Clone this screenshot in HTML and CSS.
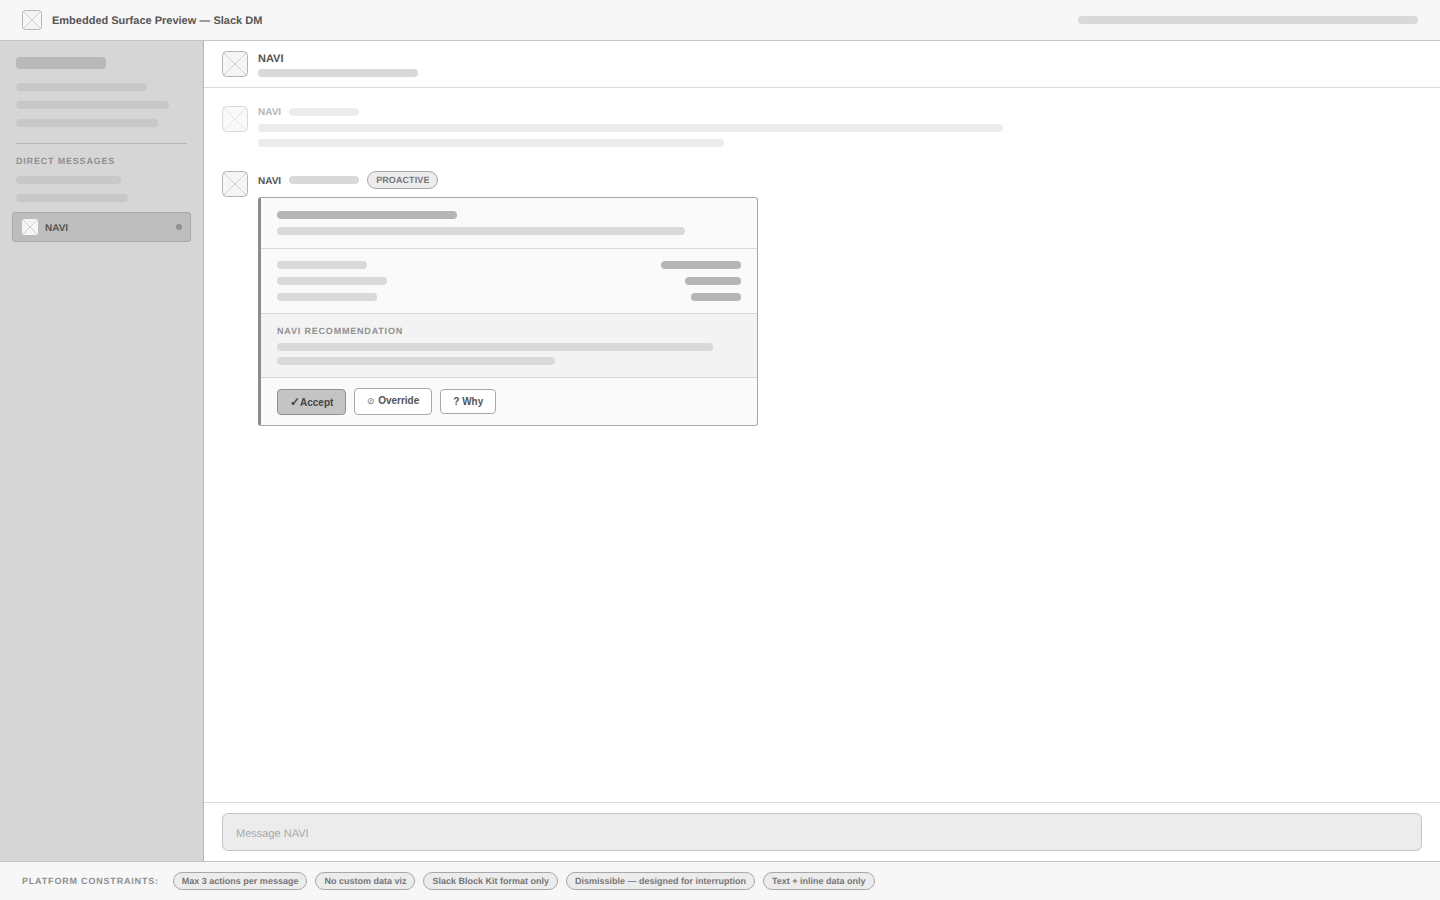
FILE: index.html
```html
<!DOCTYPE html>
<html lang="en">
<head>
<meta charset="utf-8">
<title>Embedded Surface Preview — Slack DM</title>
<link rel="stylesheet" href="styles.css">
</head>
<body>
<div class="app">
  <header class="topbar">
    <svg class="ph ph-20" viewBox="0 0 20 20"><rect x=".5" y=".5" width="19" height="19" rx="3"/><path d="M1 1L19 19M19 1L1 19"/></svg>
    <span class="top-title">Embedded Surface Preview — Slack DM</span>
    <span class="bar top-bar"></span>
  </header>
  <div class="middle">
    <aside class="sidebar">
      <span class="bar side-title"></span>
      <div class="side-group">
        <span class="bar side-line w131"></span>
        <span class="bar side-line w153"></span>
        <span class="bar side-line w142"></span>
      </div>
      <div class="side-rule"></div>
      <div class="side-label">DIRECT MESSAGES</div>
      <div class="side-group dm-group">
        <span class="bar side-line w105"></span>
        <span class="bar side-line w112"></span>
      </div>
      <div class="dm-row">
        <svg class="ph ph-16" viewBox="0 0 16 16"><rect width="16" height="16" rx="2"/><path d="M0 0L16 16M16 0L0 16"/></svg>
        <span class="dm-name">NAVI</span>
        <span class="dm-dot"></span>
      </div>
    </aside>
    <main class="main">
      <div class="chat-head">
        <svg class="ph ph-26" viewBox="0 0 26 26"><rect x=".5" y=".5" width="25" height="25" rx="4"/><path d="M1 1L25 25M25 1L1 25"/></svg>
        <div class="chat-head-text">
          <div class="head-name">NAVI</div>
          <span class="bar head-bar"></span>
        </div>
      </div>
      <div class="messages">
        <div class="msg msg-old">
          <svg class="ph ph-26" viewBox="0 0 26 26"><rect x=".5" y=".5" width="25" height="25" rx="4"/><path d="M1 1L25 25M25 1L1 25"/></svg>
          <div class="msg-body">
            <div class="msg-meta"><span class="msg-name">NAVI</span><span class="bar meta-bar"></span></div>
            <span class="bar old-line w745"></span>
            <span class="bar old-line w466"></span>
          </div>
        </div>
        <div class="msg msg-new">
          <svg class="ph ph-26" viewBox="0 0 26 26"><rect x=".5" y=".5" width="25" height="25" rx="4"/><path d="M1 1L25 25M25 1L1 25"/></svg>
          <div class="msg-body">
            <div class="msg-meta new-meta"><span class="msg-name">NAVI</span><span class="bar meta-bar"></span><span class="badge">PROACTIVE</span></div>
            <div class="card">
              <section class="card-head">
                <span class="bar dark w180"></span>
                <span class="bar light w408"></span>
              </section>
              <section class="card-rows">
                <div class="row"><span class="bar light w90"></span><span class="bar dark w80"></span></div>
                <div class="row"><span class="bar light w110"></span><span class="bar dark w56"></span></div>
                <div class="row"><span class="bar light w100"></span><span class="bar dark w50"></span></div>
              </section>
              <section class="card-rec">
                <div class="rec-label">NAVI RECOMMENDATION</div>
                <span class="bar light w436"></span>
                <span class="bar light w278"></span>
              </section>
              <section class="card-actions">
                <button class="btn btn-primary" type="button"><span class="check">✓</span>Accept</button>
                <button class="btn btn-override" type="button"><span class="no">⊘</span> Override</button>
                <button class="btn btn-why" type="button">? Why</button>
              </section>
            </div>
          </div>
        </div>
      </div>
      <div class="composer">
        <div class="composer-input">Message NAVI</div>
      </div>
    </main>
  </div>
  <footer class="footer">
    <span class="foot-label">PLATFORM CONSTRAINTS:</span>
    <span class="chip">Max 3 actions per message</span>
    <span class="chip">No custom data viz</span>
    <span class="chip">Slack Block Kit format only</span>
    <span class="chip">Dismissible — designed for interruption</span>
    <span class="chip">Text + inline data only</span>
  </footer>
</div>
</body>
</html>
```
FILE: styles.css
```css
* { box-sizing: border-box; }
html, body { margin: 0; height: 100%; }
body { font-family: "Liberation Sans", Arial, sans-serif; background: #fff; color: #555; text-rendering: geometricPrecision; }
.app { width: 1440px; height: 900px; display: flex; flex-direction: column; overflow: hidden; }

.bar { display: block; height: 8px; border-radius: 4px; background: #d9d9d9; flex: none; }
.dark { background: #b5b5b5; }
.light { background: #d9d9d9; }

.ph { display: block; flex: none; }
.ph rect { fill: #f5f5f5; stroke: #b5b5b5; stroke-width: 1; }
.ph path { fill: none; stroke: #c4c4c4; stroke-width: .8; }
.ph-20 { width: 20px; height: 20px; }
.ph-26 { width: 26px; height: 26px; }
.ph-16 { width: 16px; height: 16px; }
.ph-16 rect { fill: #f5f5f5; stroke: none; }

.topbar { height: 41px; flex: none; display: flex; align-items: center; padding: 0 22px; background: #f7f7f7; border-bottom: 1px solid #c4c4c4; }
.top-title { margin-left: 10px; padding-top: 2px; font-size: 11px; font-weight: 700; color: #555; }
.top-bar { margin-left: auto; width: 340px; background: #d9d9d9; }

.middle { flex: 1; display: flex; min-height: 0; }
.sidebar { width: 204px; flex: none; background: #d6d6d6; border-right: 1px solid #b5b5b5; padding: 16px 12px 0; }
.side-title { width: 90px; height: 12px; margin-left: 4px; background: #b8b8b8; }
.side-group { display: flex; flex-direction: column; gap: 10px; margin: 14px 0 0 4px; }
.side-line { background: #c8c8c8; }
.w131 { width: 131px; } .w153 { width: 153px; } .w142 { width: 142px; }
.w105 { width: 105px; } .w112 { width: 112px; }
.side-rule { height: 1px; margin: 16px 4px 0; background: #b5b5b5; }
.side-label { margin: 12px 0 0 4px; font-size: 9px; line-height: 10px; font-weight: 700; letter-spacing: .81px; color: #909090; }
.dm-group { margin-top: 10px; }
.dm-row { height: 30px; margin-top: 10px; display: flex; align-items: center; padding: 0 8px 0 9px; background: #bdbdbd; border: 1px solid #a8a8a8; border-radius: 3px; }
.dm-name { margin-left: 7px; padding-top: 2px; font-size: 10px; font-weight: 700; color: #555; }
.dm-dot { margin-left: auto; width: 6px; height: 6px; border-radius: 50%; background: #909090; }

.main { flex: 1; min-width: 0; display: flex; flex-direction: column; background: #fff; }
.chat-head { height: 47px; flex: none; display: flex; align-items: center; gap: 10px; padding: 0 18px; border-bottom: 1px solid #d9d9d9; }
.head-name { font-size: 11px; line-height: 13px; font-weight: 700; color: #555; padding-top: 2px; margin-bottom: -2px; }
.head-bar { width: 160px; margin-top: 5px; }
.messages { flex: 1; min-height: 0; padding: 18px 18px 0; }
.msg { display: flex; gap: 10px; }
.msg-body { flex: 1; min-width: 0; }
.msg-old { height: 65px; }
.msg-old .ph { opacity: .5; }
.msg-meta { display: flex; align-items: center; height: 12px; }
.msg-name { font-size: 10px; line-height: 12px; font-weight: 700; color: #555; padding-top: 2px; }
.meta-bar { width: 70px; margin-left: 8px; }
.msg-old .msg-name { color: #b5b5b5; }
.msg-old .bar { background: #ececec; }
.old-line { margin-top: 7px; }
.msg-old .old-line:nth-child(2) { margin-top: 6px; }
.w745 { width: 745px; } .w466 { width: 466px; }
.new-meta { height: 18px; margin-bottom: 8px; }
.msg-new .msg-name { line-height: 14px; padding-top: 4px; }
.badge { margin-left: 8px; height: 18px; padding: 0 8px; display: flex; align-items: center; font-size: 9px; font-weight: 700; letter-spacing: .09px; color: #777; background: #ececec; border: 1px solid #a8a8a8; border-radius: 9px; }

.card { width: 500px; background: #fafafa; border: 1px solid #a8a8a8; border-left: 3px solid #8c8c8c; border-radius: 3px; }
.card-head { height: 51px; padding: 13px 16px 0; display: flex; flex-direction: column; gap: 8px; border-bottom: 1px solid #d9d9d9; }
.w180 { width: 180px; } .w408 { width: 408px; }
.card-rows { height: 65px; padding: 12px 16px 0; display: flex; flex-direction: column; gap: 8px; border-bottom: 1px solid #d9d9d9; }
.row { display: flex; justify-content: space-between; }
.w90 { width: 90px; } .w110 { width: 110px; } .w100 { width: 100px; }
.w80 { width: 80px; } .w56 { width: 56px; } .w50 { width: 50px; }
.card-rec { height: 64px; padding: 12px 16px 0; background: #f3f3f3; border-bottom: 1px solid #d9d9d9; }
.rec-label { font-size: 9px; line-height: 10px; font-weight: 700; letter-spacing: .81px; color: #909090; margin-bottom: 7px; }
.card-rec .w436 { margin-bottom: 6px; }
.w436 { width: 436px; } .w278 { width: 278px; }
.card-actions { height: 47px; padding: 0 16px; display: flex; align-items: center; gap: 8px; }
.btn { padding: 0 12px; font-family: "Liberation Sans", Arial, sans-serif; font-size: 10px; font-weight: 700; color: #555; background: #fff; border: 1px solid #a8a8a8; border-radius: 4px; }
.btn-primary { height: 26px; padding-top: 1px; background: #c4c4c4; border-color: #909090; color: #444; }
.check { font-size: 12px; }
.btn-override { height: 27px; padding-bottom: 2px; }
.no { font-size: 9px; color: #777; font-weight: 400; }
.btn-why { height: 25px; }

.composer { height: 59px; flex: none; padding: 10px 18px; border-top: 1px solid #d9d9d9; }
.composer-input { height: 38px; display: flex; align-items: center; padding: 4px 13px 0; font-size: 11px; color: #a8a8a8; background: #ececec; border: 1px solid #c4c4c4; border-radius: 6px; }

.footer { height: 39px; flex: none; display: flex; align-items: center; gap: 8px; padding: 0 22px; background: #f7f7f7; border-top: 1px solid #c4c4c4; }
.foot-label { margin-right: 6px; font-size: 9px; font-weight: 700; letter-spacing: .81px; color: #909090; }
.chip { height: 18px; display: flex; align-items: center; padding: 0 8px; font-size: 9px; font-weight: 700; color: #777; background: #ececec; border: 1px solid #a8a8a8; border-radius: 9px; }
```
